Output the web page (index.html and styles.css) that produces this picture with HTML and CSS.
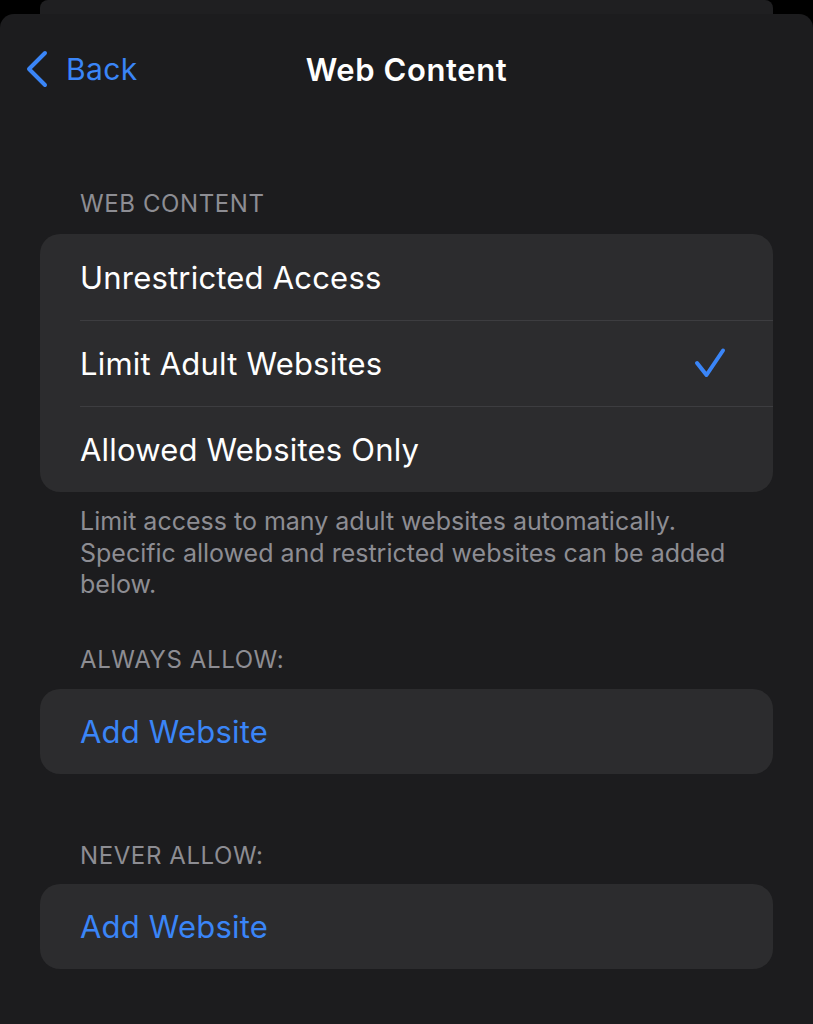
FILE: index.html
```html
<!DOCTYPE html>
<html>
<head>
<meta charset="utf-8">
<link rel="stylesheet" href="styles.css">
</head>
<body>
<div class="behind"></div>
<div class="sheet">
  <div class="nav">
    <div class="back">
      <svg class="chev" width="26" height="40" viewBox="0 0 26 40"><polyline points="19,4 3,20 19,36" fill="none" stroke="#3a85f7" stroke-width="4" stroke-linecap="round" stroke-linejoin="round"/></svg>
      <span>Back</span>
    </div>
    <div class="title">Web Content</div>
  </div>

  <div class="group-header first">WEB CONTENT</div>
  <div class="card">
    <div class="row">Unrestricted Access</div>
    <div class="row sep">Limit Adult Websites
      <svg class="check" width="34" height="34" viewBox="0 0 34 34"><polyline points="4,17 13.5,29 30,4.5" fill="none" stroke="#3a85f7" stroke-width="4" stroke-linecap="round" stroke-linejoin="round"/></svg>
    </div>
    <div class="row sep">Allowed Websites Only</div>
  </div>
  <div class="footer">Limit access to many adult websites automatically.<br>Specific allowed and restricted websites can be added<br>below.</div>

  <div class="group-header second">ALWAYS ALLOW:</div>
  <div class="card">
    <div class="row link">Add Website</div>
  </div>

  <div class="group-header third">NEVER ALLOW:</div>
  <div class="card">
    <div class="row link">Add Website</div>
  </div>
</div>
</body>
</html>
```
FILE: styles.css
```css
html, body {
  margin: 0;
  padding: 0;
  background: #000;
}
body {
  font-family: Inter, "Noto Sans", sans-serif;
  color: #fff;
  overflow: hidden;
  height: 1024px;
}
.behind {
  height: 14px;
  margin: 0 40px;
  background: #1f1f21;
  border-radius: 8px 8px 0 0;
}
.sheet {
  background: #1c1c1e;
  border-radius: 14px 14px 0 0;
  height: 1010px;
}
.nav {
  position: relative;
  height: 110px;
  display: flex;
  align-items: center;
  justify-content: center;
}
.back {
  position: absolute;
  left: 26px;
  top: 35px;
  display: flex;
  align-items: center;
  color: #3a85f7;
  font-size: 30px;
  letter-spacing: 0.4px;
}
.back span {
  margin-left: 14px;
}
.title {
  font-size: 31px;
  font-weight: 600;
  letter-spacing: 0.6px;
}
.group-header {
  margin: 0 80px;
  font-size: 24px;
  line-height: 30px;
  color: #8d8d93;
  letter-spacing: 0.6px;
}
.group-header.first { margin-top: 65px; margin-bottom: 15px; }
.group-header.second { margin-top: 44px; margin-bottom: 14px; }
.group-header.third { margin-top: 67px; margin-bottom: 13px; }
.card {
  margin: 0 40px;
  background: #2c2c2e;
  border-radius: 20px;
  overflow: hidden;
}
.row {
  position: relative;
  height: 86px;
  display: flex;
  align-items: center;
  padding-left: 40px;
  padding-right: 46px;
  font-size: 31px;
  letter-spacing: 0.2px;
}
.card .row:only-child { height: 85px; }
.row.sep::before {
  content: "";
  position: absolute;
  left: 40px;
  right: 0;
  top: 0;
  height: 1px;
  background: #3d3d40;
}
.check {
  margin-left: auto;
}
.link {
  color: #3a85f7;
}
.footer {
  margin: 14px 20px 0 80px;
  font-size: 25px;
  line-height: 31.5px;
  color: #8d8d93;
  letter-spacing: 0px;
  white-space: nowrap;
}
```
